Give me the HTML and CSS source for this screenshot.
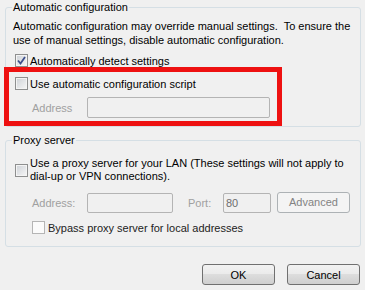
FILE: index.html
```html
<!DOCTYPE html>
<html lang="en">
<head>
    <meta charset="UTF-8">
    <title>Local Area Network (LAN) Settings</title>
    <link rel="stylesheet" href="styles.css">
</head>
<body>
    <fieldset class="group group-auto">
        <legend>Automatic configuration</legend>
        <p class="note">Automatic configuration may override manual settings.&nbsp; To ensure the<br>use of manual settings, disable automatic configuration.</p>
        <label class="check-row">
            <span class="box checked">
                <svg width="9" height="9" viewBox="0 0 9 9"><path d="M1 4.5 L3.5 7.5 L8 1" fill="none" stroke="#3d4f8c" stroke-width="1.8"/></svg>
            </span>
            Automatically detect settings
        </label>
        <div class="marked">
            <label class="check-row">
                <span class="box"></span>
                Use automatic configuration script
            </label>
            <div class="field-row">
                <span class="dim label-addr">Address</span>
                <span class="input input-script"></span>
            </div>
        </div>
    </fieldset>

    <fieldset class="group group-proxy">
        <legend>Proxy server</legend>
        <label class="check-row proxy-row">
            <span class="box"></span>
            <span>Use a proxy server for your LAN (These settings will not apply to<br>dial-up or VPN connections).</span>
        </label>
        <div class="field-row proxy-fields">
            <span class="dim label-addr2">Address:</span>
            <span class="input input-addr"></span>
            <span class="dim label-port">Port:</span>
            <span class="input input-port">80</span>
            <span class="btn-advanced">Advanced</span>
        </div>
        <label class="check-row bypass-row">
            <span class="box off"></span>
            Bypass proxy server for local addresses
        </label>
    </fieldset>

    <div class="actions">
        <button class="btn">OK</button>
        <button class="btn">Cancel</button>
    </div>
</body>
</html>
```

FILE: styles.css
```css
* {
    margin: 0;
    padding: 0;
    box-sizing: border-box;
}
body {
    font-family: 'Liberation Sans', Arial, sans-serif;
    font-size: 11px;
    color: #000;
    background: #f0f0f0;
    padding: 0 4px 0 5px;
    width: 365px;
    height: 290px;
    overflow: hidden;
    white-space: nowrap;
}
.group {
    border: 1px solid #d5dfe5;
    border-radius: 3px;
    padding: 0 7px;
}
.group legend {
    line-height: 14px;
    padding: 0 1px;
    margin-left: -1px;
}
.group-auto {
    padding-bottom: 0;
}
.note {
    line-height: 14px;
    margin-top: 5px;
}
.check-row {
    display: flex;
    align-items: center;
    height: 13px;
    margin-top: 7px;
    margin-left: 2px;
}
.box {
    width: 13px;
    height: 13px;
    border: 1px solid #8e8f8f;
    background: linear-gradient(135deg, #cdd1d6, #f7f7f7);
    box-shadow: inset 0 0 0 1px #f4f4f4;
    margin-right: 2px;
    display: flex;
    align-items: center;
    justify-content: center;
    flex-shrink: 0;
}
.box.off {
    border-color: #b5b5b5;
    background: #fbfbfb;
    box-shadow: none;
}
.marked {
    border: 5px solid #ee1111;
    margin: 0 0 0 -9px;
    width: 278px;
    height: 59px;
    padding: 0 0 0 4px;
}
.marked .check-row {
    margin-top: 5px;
}
.dim {
    color: #a0a0a0;
}
.field-row {
    display: flex;
    align-items: center;
    margin-top: 7px;
}
.label-addr {
    margin-left: 19px;
    width: 55px;
}
.input {
    height: 21px;
    border: 1px solid #b4b4b4;
    border-radius: 2px;
    background: #f0f0f0;
    line-height: 19px;
    padding-left: 2px;
    color: #6d6d6d;
}
.input-script {
    width: 183px;
}
.proxy-row {
    height: 26px;
    margin-top: 10px;
    line-height: 13px;
}
.proxy-fields {
    margin-top: 9px;
}
.label-addr2 {
    margin-left: 19px;
    width: 55px;
}
.input-addr {
    width: 86px;
    height: 20px;
}
.label-port {
    margin-left: 15px;
    width: 35px;
}
.input-port {
    width: 48px;
    height: 20px;
    line-height: 18px;
}
.btn-advanced {
    margin-left: 6px;
    width: 73px;
    height: 21px;
    border: 1px solid #adb2b5;
    border-radius: 3px;
    background: #f4f4f4;
    color: #838383;
    text-align: center;
    line-height: 19px;
}
.bypass-row {
    margin-left: 19px;
    margin-top: 8px;
    color: #222;
}
.bypass-row .box {
    margin-right: 3px;
}
.group-proxy {
    margin-top: 6px;
    padding-bottom: 12px;
}
.actions {
    display: flex;
    justify-content: flex-end;
    gap: 12px;
    margin-top: 17px;
    padding-right: 1px;
}
.btn {
    width: 73px;
    height: 21px;
    font-family: inherit;
    font-size: 11px;
    color: #000;
    border: 1px solid #707070;
    border-radius: 3px;
    background: linear-gradient(#f2f2f2 0%, #ebebeb 45%, #dddddd 50%, #cfcfcf 100%);
}
```
